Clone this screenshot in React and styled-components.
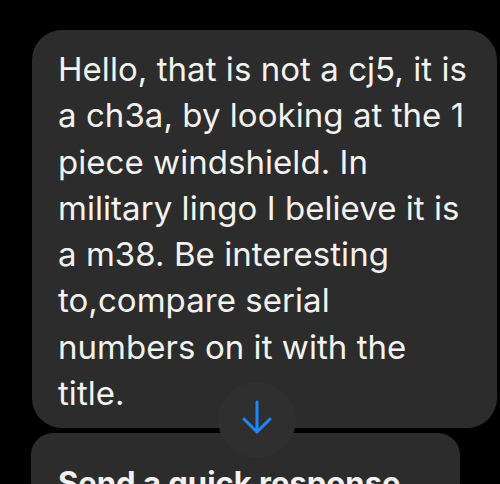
import React from "react";
import styled, { createGlobalStyle } from "styled-components";

const Global = createGlobalStyle`
  html, body {
    margin: 0;
    padding: 0;
    background: #000;
  }
  body {
    font-family: Inter, "Noto Sans", sans-serif;
    -webkit-font-smoothing: antialiased;
  }
`;

const Screen = styled.div`
  position: relative;
  width: 500px;
  height: 484px;
  overflow: hidden;
  padding: 30px 0 0 32px;
  box-sizing: border-box;
  display: flex;
  flex-direction: column;
  gap: 5px;
`;

const Bubble = styled.div`
  width: 465px;
  box-sizing: border-box;
  background: #2c2c2c;
  border-radius: 30px;
  padding: 16px 10px 12px 26px;
  color: #f2f2f2;
  font-size: 33px;
  line-height: 46.3px;
  letter-spacing: 0.05px;
  white-space: nowrap;
`;

const QuickCard = styled.div`
  width: 429px;
  height: 120px;
  margin-left: -1px;
  box-sizing: border-box;
  background: #2c2c2c;
  border-radius: 22px;
  padding: 31px 0 0 27px;
  color: #f2f2f2;
  font-size: 31px;
  font-weight: 700;
  line-height: 38px;
  white-space: nowrap;
`;

const ScrollButton = styled.div`
  position: absolute;
  left: 218px;
  top: 382px;
  width: 78px;
  height: 76px;
  border-radius: 50%;
  background: #2f2f2f;
  display: flex;
  align-items: flex-start;
  justify-content: center;
  padding-top: 18px;
  box-sizing: border-box;
`;

const DownArrow = () => (
  <svg width="32" height="36" viewBox="0 0 32 36" fill="none">
    <path
      d="M16 2 V32 M3 19 L16 32 L29 19"
      stroke="#1f86f5"
      strokeWidth="3"
      strokeLinecap="round"
      strokeLinejoin="round"
    />
  </svg>
);

const lines = [
  "Hello, that is not a cj5, it is",
  "a ch3a, by looking at the 1",
  "piece windshield. In",
  "military lingo I believe it is",
  "a m38. Be interesting",
  "to,compare serial",
  "numbers on it with the",
  "title.",
];

export default function App() {
  return (
    <>
      <Global />
      <Screen>
        <Bubble>
          {lines.map((l, i) => (
            <div key={i}>{l}</div>
          ))}
        </Bubble>
        <QuickCard>Send a quick response</QuickCard>
        <ScrollButton>
          <DownArrow />
        </ScrollButton>
      </Screen>
    </>
  );
}
